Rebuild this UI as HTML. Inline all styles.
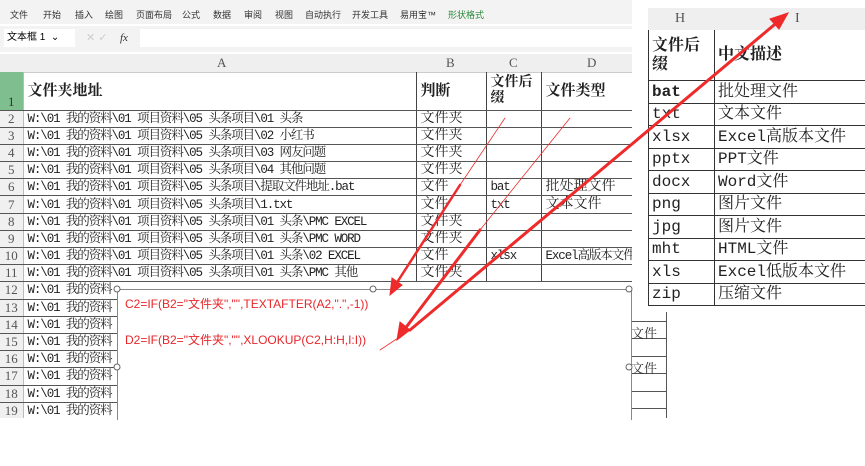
<!DOCTYPE html>
<html><head><meta charset="utf-8"><style>
body{margin:0;width:865px;height:466px;background:#fff;position:relative;overflow:hidden;font-family:"Liberation Serif","Noto Serif CJK SC",serif;}
.ab{position:absolute;}
.ribbon{left:0;top:0;width:632px;height:24px;background:#f3f3f3;font:9px "Liberation Sans","Noto Sans CJK SC",sans-serif;color:#333;}
.ribbon span{position:absolute;top:8px;}
.fbar{left:0;top:26px;width:632px;height:26px;background:#f3f3f3;}
table{border-collapse:collapse;position:absolute;}
td{padding:0 0 0 4px;white-space:nowrap;overflow:hidden;font-size:14px;color:#222;}
.g td{border-bottom:1.5px solid #555;height:16.2px;line-height:16px;}
.g td.m{font-family:"Liberation Mono","Noto Serif CJK SC",monospace;font-size:12.5px;letter-spacing:-1.1px;}
.rh{background:#f0f0f0;color:#555;text-align:center;padding:0!important;font-size:13px;border-right:1px solid #bbb!important;}
.r td{height:21.5px;line-height:20px;padding:0 0 0 3px;font-size:16px;border-bottom:1.5px solid #333;}
.r td:first-child{font-family:"Liberation Mono",monospace;border-right:1px solid #333;}
.r td.mm{font-family:"Liberation Mono","Noto Serif CJK SC",monospace;}
</style></head><body>
<div class="ab ribbon">
<span style="left:10px">文件</span><span style="left:43px">开始</span><span style="left:75px">插入</span><span style="left:105px">绘图</span><span style="left:136px">页面布局</span><span style="left:182px">公式</span><span style="left:213px">数据</span><span style="left:244px">审阅</span><span style="left:275px">视图</span><span style="left:305px">自动执行</span><span style="left:352px">开发工具</span><span style="left:400px">易用宝™</span><span style="left:448px;color:#2a8a3a">形状格式</span>
</div>
<div class="ab fbar">
<div class="ab" style="left:4px;top:3px;width:68px;height:18px;background:#fff;font:10px 'Liberation Sans','Noto Sans CJK SC',sans-serif;line-height:18px;padding-left:3px;">文本框 1 &nbsp;⌄</div>
<div class="ab" style="left:86px;top:3px;width:24px;height:18px;color:#ccc;font:11px sans-serif;line-height:18px">✕ ✓</div>
<div class="ab" style="left:120px;top:3px;font:italic 11px 'Liberation Serif',serif;line-height:18px;color:#333">fx</div>
<div class="ab" style="left:140px;top:3px;width:492px;height:18px;background:#fff;"></div>
</div>
<div class="ab" style="left:0;top:54px;width:640px;height:18px;background:#efefef;border-bottom:1px solid #ccc;font-size:13px;color:#555">
<span class="ab" style="left:217px;top:1px">A</span><span class="ab" style="left:446px;top:1px">B</span><span class="ab" style="left:509px;top:1px">C</span><span class="ab" style="left:587px;top:1px">D</span>
</div>
<table class="g" style="left:0;top:72px;width:641px;table-layout:fixed">
<colgroup><col style="width:23px"><col style="width:393px"><col style="width:70px"><col style="width:55px"><col style="width:100px"></colgroup>
<tr style="height:38px"><td class="rh" style="background:#7fbf8f;color:#333;vertical-align:bottom;height:37px">1</td><td style="font-weight:bold;font-size:15px;border-right:1.5px solid #444;">文件夹地址</td><td style="font-weight:bold;font-size:15px;border-right:1.5px solid #444;">判断</td><td style="font-weight:bold;font-size:14px;line-height:16px;white-space:normal;border-right:1.5px solid #444;">文件后缀</td><td style="font-weight:bold;font-size:15px">文件类型</td></tr>
<tr><td class="rh">2</td><td class="m" style="border-right:1px solid #444">W:\01 我的资料\01 项目资料\05 头条项目\01 头条</td><td style="border-right:1px solid #444">文件夹</td><td style="border-right:1px solid #444"></td><td></td></tr>
<tr><td class="rh">3</td><td class="m" style="border-right:1px solid #444">W:\01 我的资料\01 项目资料\05 头条项目\02 小红书</td><td style="border-right:1px solid #444">文件夹</td><td style="border-right:1px solid #444"></td><td></td></tr>
<tr><td class="rh">4</td><td class="m" style="border-right:1px solid #444">W:\01 我的资料\01 项目资料\05 头条项目\03 网友问题</td><td style="border-right:1px solid #444">文件夹</td><td style="border-right:1px solid #444"></td><td></td></tr>
<tr><td class="rh">5</td><td class="m" style="border-right:1px solid #444">W:\01 我的资料\01 项目资料\05 头条项目\04 其他问题</td><td style="border-right:1px solid #444">文件夹</td><td style="border-right:1px solid #444"></td><td></td></tr>
<tr><td class="rh">6</td><td class="m" style="border-right:1px solid #444">W:\01 我的资料\01 项目资料\05 头条项目\提取文件地址.bat</td><td style="border-right:1px solid #444">文件</td><td class="m" style="border-right:1px solid #444">bat</td><td>批处理文件</td></tr>
<tr><td class="rh">7</td><td class="m" style="border-right:1px solid #444">W:\01 我的资料\01 项目资料\05 头条项目\1.txt</td><td style="border-right:1px solid #444">文件</td><td class="m" style="border-right:1px solid #444">txt</td><td>文本文件</td></tr>
<tr><td class="rh">8</td><td class="m" style="border-right:1px solid #444">W:\01 我的资料\01 项目资料\05 头条项目\01 头条\PMC EXCEL</td><td style="border-right:1px solid #444">文件夹</td><td style="border-right:1px solid #444"></td><td></td></tr>
<tr><td class="rh">9</td><td class="m" style="border-right:1px solid #444">W:\01 我的资料\01 项目资料\05 头条项目\01 头条\PMC WORD</td><td style="border-right:1px solid #444">文件夹</td><td style="border-right:1px solid #444"></td><td></td></tr>
<tr><td class="rh">10</td><td class="m" style="border-right:1px solid #444">W:\01 我的资料\01 项目资料\05 头条项目\01 头条\02 EXCEL</td><td style="border-right:1px solid #444">文件</td><td class="m" style="border-right:1px solid #444">xlsx</td><td class="m">Excel高版本文件</td></tr>
<tr><td class="rh">11</td><td class="m" style="border-right:1px solid #444">W:\01 我的资料\01 项目资料\05 头条项目\01 头条\PMC 其他</td><td style="border-right:1px solid #444">文件夹</td><td style="border-right:1px solid #444"></td><td></td></tr>
<tr><td class="rh">12</td><td class="m">W:\01 我的资料</td><td></td><td></td><td></td></tr>
<tr><td class="rh">13</td><td class="m">W:\01 我的资料</td><td></td><td></td><td></td></tr>
<tr><td class="rh">14</td><td class="m">W:\01 我的资料</td><td></td><td></td><td></td></tr>
<tr><td class="rh">15</td><td class="m">W:\01 我的资料</td><td></td><td></td><td></td></tr>
<tr><td class="rh">16</td><td class="m">W:\01 我的资料</td><td></td><td></td><td></td></tr>
<tr><td class="rh">17</td><td class="m">W:\01 我的资料</td><td></td><td></td><td></td></tr>
<tr><td class="rh">18</td><td class="m">W:\01 我的资料</td><td></td><td></td><td></td></tr>
<tr><td class="rh">19</td><td class="m">W:\01 我的资料</td><td></td><td></td><td></td></tr>
</table>
<div class="ab" style="left:0;top:418px;width:865px;height:48px;background:#fff"></div>
<div class="ab" style="left:632px;top:0;width:233px;height:320px;background:#fff"></div>
<div class="ab" style="left:648px;top:8px;width:217px;height:22px;background:#efefef;font-size:14px;color:#555"><span class="ab" style="left:27px;top:3px">H</span><span class="ab" style="left:147px;top:3px">I</span></div>
<table class="r" style="left:648px;top:30px;width:230px;table-layout:fixed;border-left:1.5px solid #333">
<colgroup><col style="width:66px"><col style="width:164px"></colgroup>
<tr><td style="height:50px;font-weight:bold;white-space:normal;line-height:19px;font-family:'Liberation Serif','Noto Serif CJK SC',serif">文件后缀</td><td style="height:50px;font-weight:bold">中文描述</td></tr>
<tr><td style="font-weight:bold">bat</td><td>批处理文件</td></tr>
<tr><td>txt</td><td>文本文件</td></tr>
<tr><td>xlsx</td><td class="mm">Excel高版本文件</td></tr>
<tr><td>pptx</td><td class="mm">PPT文件</td></tr>
<tr><td>docx</td><td class="mm">Word文件</td></tr>
<tr><td>png</td><td>图片文件</td></tr>
<tr><td>jpg</td><td>图片文件</td></tr>
<tr><td>mht</td><td class="mm">HTML文件</td></tr>
<tr><td>xls</td><td class="mm">Excel低版本文件</td></tr>
<tr><td>zip</td><td>压缩文件</td></tr>
</table>
<div class="ab" style="left:630px;top:312px;width:36px;height:106px;border-right:1px solid #555;background:#fff"></div>
<div class="ab" style="left:630px;top:321px;width:36px;border-top:1px solid #555"></div>
<div class="ab" style="left:630px;top:338px;width:36px;border-top:1px solid #555"></div>
<div class="ab" style="left:630px;top:356px;width:36px;border-top:1px solid #555"></div>
<div class="ab" style="left:630px;top:373px;width:36px;border-top:1px solid #555"></div>
<div class="ab" style="left:630px;top:391px;width:36px;border-top:1px solid #555"></div>
<div class="ab" style="left:630px;top:408px;width:36px;border-top:1px solid #555"></div>
<div class="ab" style="left:631px;top:323px;font-size:13px;color:#333">文件</div>
<div class="ab" style="left:631px;top:358px;font-size:13px;color:#333">文件</div>
<div class="ab" style="left:117px;top:289px;width:513px;height:130px;background:#fff;border:1px solid #888;border-bottom:none"></div>
<div class="ab" style="left:125px;top:295px;font:12px 'Liberation Sans','Noto Sans CJK SC',sans-serif;color:#e8262a">C2=IF(B2="文件夹","",TEXTAFTER(A2,".",-1))</div>
<div class="ab" style="left:125px;top:331px;font:12px 'Liberation Sans','Noto Sans CJK SC',sans-serif;color:#e8262a">D2=IF(B2="文件夹","",XLOOKUP(C2,H:H,I:I))</div>
<svg class="ab" style="left:0;top:0" width="865" height="466">
<g fill="#fff" stroke="#666" stroke-width="1">
<circle cx="117" cy="289" r="3"/><circle cx="373" cy="289" r="3"/><circle cx="629" cy="289" r="3"/><circle cx="117" cy="367" r="3"/><circle cx="629" cy="367" r="3"/></g>
<g stroke="#ee2a2a" fill="#ee2a2a" stroke-linecap="round">
<line x1="505" y1="118" x2="460" y2="185" stroke-width="0.8"/>
<line x1="460" y1="185" x2="396" y2="284" stroke-width="2.5"/>
<polygon points="390,295 392,278 402,285"/>
<line x1="570" y1="118" x2="480" y2="230" stroke-width="0.8"/>
<line x1="480" y1="230" x2="404" y2="330" stroke-width="3"/>
<polygon points="397,340 400,322 410,330"/>
<line x1="780" y1="20" x2="410" y2="330" stroke-width="3"/>
<line x1="410" y1="330" x2="380" y2="350" stroke-width="0.8"/>
<polygon points="788,13 770,19 779,29"/>
</g>
</svg>
</body></html>
